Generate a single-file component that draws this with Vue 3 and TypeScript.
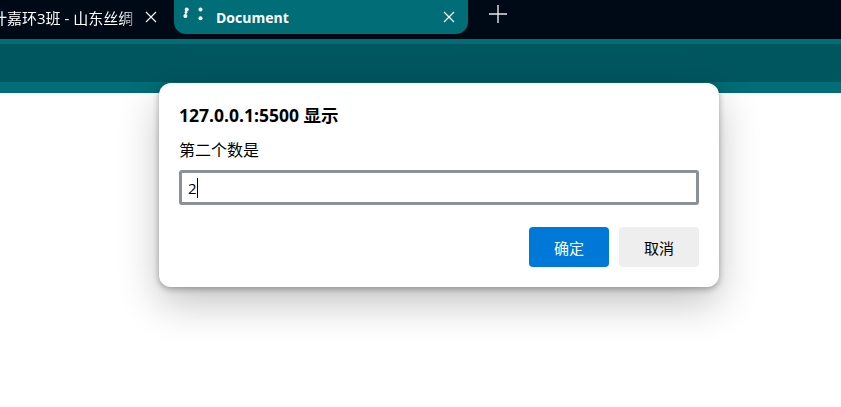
<template>
  <div class="page">
    <!-- 标签栏 -->
    <div class="tabstrip">
      <div class="tab">
        <span class="tab-title">计嘉环3班 - 山东丝绸</span>
        <svg class="close" width="12" height="12" viewBox="0 0 12 12">
          <path d="M1 1 L11 11 M11 1 L1 11" stroke="#f2f5f6" stroke-width="1.2" fill="none" />
        </svg>
      </div>
      <div class="tab active">
        <svg class="spinner" width="22" height="20" viewBox="0 0 22 20">
          <circle cx="4.7" cy="2.4" r="2" fill="#fff" />
          <circle cx="3.4" cy="9" r="2" fill="#fff" />
          <circle cx="4" cy="5.5" r="1.4" fill="#fff" />
          <circle cx="18.5" cy="2.4" r="2" fill="#fff" />
          <circle cx="18.5" cy="11.3" r="2" fill="#fff" />
        </svg>
        <span class="active-title">Document</span>
        <svg class="close" width="12" height="12" viewBox="0 0 12 12">
          <path d="M1 1 L11 11 M11 1 L1 11" stroke="#fff" stroke-width="1.2" fill="none" />
        </svg>
      </div>
      <svg class="new-tab" width="18" height="18" viewBox="0 0 18 18">
        <path d="M9 0 V18 M0 9 H18" stroke="#e6e9ea" stroke-width="1.4" fill="none" />
      </svg>
    </div>
    <!-- 工具栏 -->
    <div class="toolbar-top"></div>
    <div class="toolbar"></div>
    <div class="toolbar-bottom"></div>
    <!-- 提示框 -->
    <div class="dialog">
      <div class="dialog-title">127.0.0.1:5500 显示</div>
      <div class="dialog-msg">第二个数是</div>
      <div class="dialog-input"><span>2</span><i class="caret"></i></div>
      <div class="dialog-actions">
        <button class="btn primary">确定</button>
        <button class="btn">取消</button>
      </div>
    </div>
  </div>
</template>

<script setup lang="ts">
</script>

<style scoped>
.page {
  position: relative;
  height: 407px;
  overflow: hidden;
  background: #fff;
  font-family: "Open Sans", "Noto Sans CJK SC", sans-serif;
}

.tabstrip {
  display: flex;
  height: 39px;
  background: #000a16;
  overflow: hidden;
}

.tab {
  display: flex;
  align-items: center;
  flex-shrink: 0;
  height: 34px;
  width: 176px;
  margin-left: -8px;
  box-sizing: border-box;
  padding-right: 11px;
  color: #fff;
  font-size: 15px;
}

.tab-title {
  flex: 1;
  white-space: nowrap;
  overflow: hidden;
  -webkit-mask-image: linear-gradient(to right, #000 85%, transparent);
  mask-image: linear-gradient(to right, #000 85%, transparent);
}

.tab.active {
  width: 294px;
  margin-left: 6px;
  padding: 0 13px 0 8px;
  background: #006d77;
  border-radius: 0 0 12px 12px;
  font-size: 14px;
}

.active-title {
  flex: 1;
  margin-left: 12px;
  font-weight: 700;
}

.new-tab {
  margin: 5px 0 0 21px;
}

.toolbar-top {
  height: 5px;
  background: #006d77;
}

.toolbar {
  height: 38px;
  background: #00565f;
}

.toolbar-bottom {
  height: 11px;
  background: #006d77;
}

.dialog {
  position: absolute;
  top: 83px;
  left: 159px;
  width: 560px;
  height: 204px;
  box-sizing: border-box;
  padding: 21px 20px 0;
  background: #fff;
  border-radius: 12px;
  box-shadow: 0 2px 6px rgba(0, 0, 0, 0.32), 0 16px 40px rgba(0, 0, 0, 0.24);
  color: #000;
}

.dialog-title {
  font-size: 17.5px;
  font-weight: 700;
  line-height: 22px;
}

.dialog-msg {
  margin-top: 14px;
  font-size: 16px;
  line-height: 20px;
}

.dialog-input {
  display: flex;
  align-items: center;
  height: 35px;
  margin-top: 10px;
  padding-left: 6px;
  box-sizing: border-box;
  border: 3px solid #8b9196;
  border-radius: 3px;
  font-size: 15px;
}

.caret {
  width: 1px;
  height: 20px;
  background: #000;
}

.dialog-actions {
  display: flex;
  justify-content: flex-end;
  gap: 10px;
  margin-top: 22px;
}

.btn {
  width: 80px;
  height: 40px;
  padding: 0;
  border: none;
  border-radius: 4px;
  background: #eeeeee;
  color: #000;
  font-family: inherit;
  font-size: 15px;
}

.btn.primary {
  background: #0078d7;
  color: #fff;
}
</style>

<style>
body {
  margin: 0;
}
</style>
